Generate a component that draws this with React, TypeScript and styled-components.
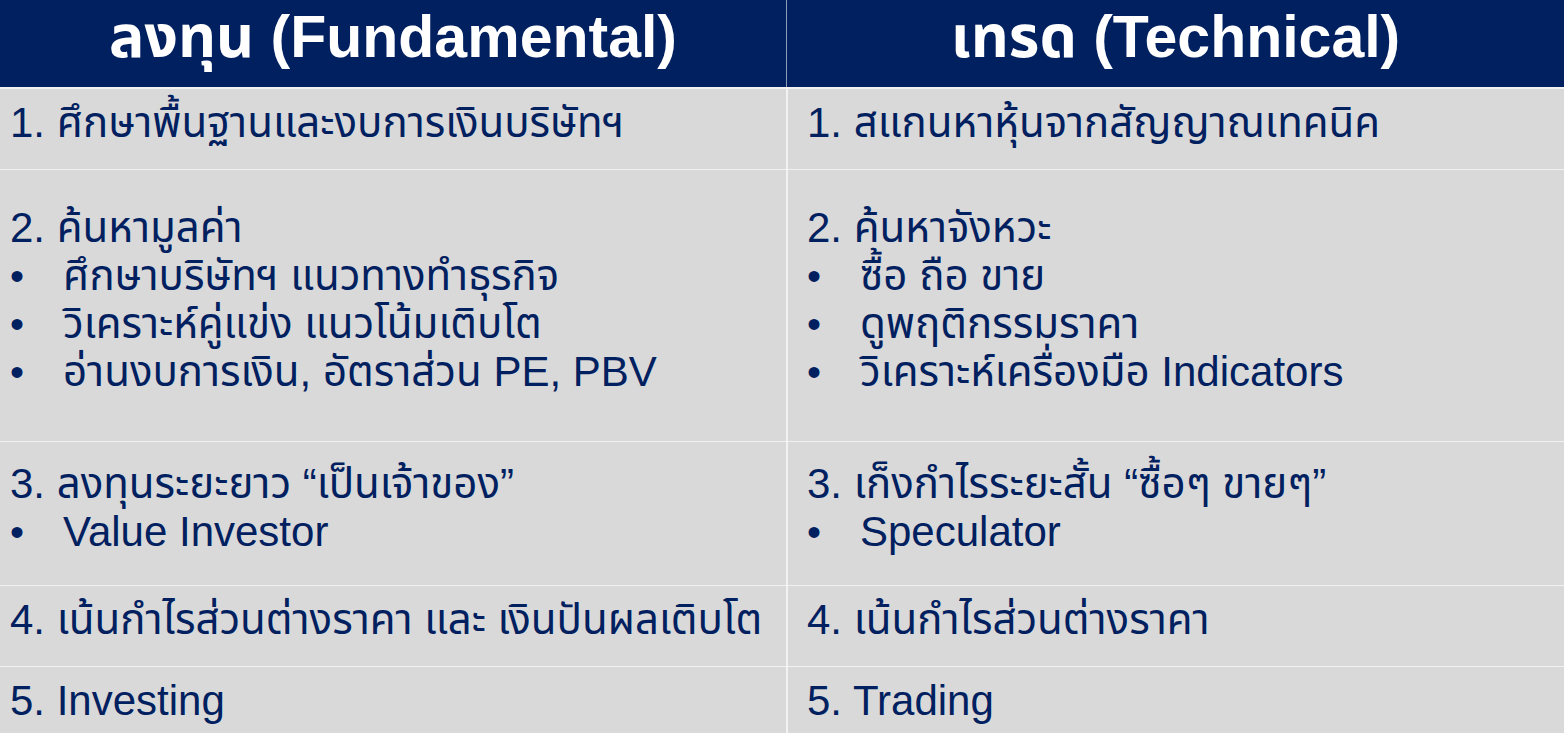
import React from "react";
import styled, { createGlobalStyle } from "styled-components";

const Global = createGlobalStyle`
  html, body {
    margin: 0;
    padding: 0;
    overflow: hidden;
    background: #d9d9d9;
  }
  body {
    font-family: "Liberation Sans", "Noto Sans Thai", "Noto Sans", sans-serif;
  }
`;

const Table = styled.div`
  width: 1564px;
  display: flex;
  flex-direction: column;
  gap: 1px;
  background: #f2f2f2;
`;

const HeaderRow = styled.div`
  display: grid;
  grid-template-columns: 786px 1fr;
  column-gap: 1px;
  height: 87px;
  margin-bottom: 1px;
  background: #8e9cbb;
`;

const HeaderCell = styled.div`
  background: #002060;
  color: #ffffff;
  display: flex;
  align-items: center;
  justify-content: center;
  font-weight: 700;
  font-size: 59px;
  line-height: 1;
  padding-bottom: 12px;
`;

const Row = styled.div<{ $h: number }>`
  display: grid;
  grid-template-columns: 786px 1fr;
  column-gap: 2px;
  height: ${(p) => p.$h}px;
`;

const Cell = styled.div<{ $pad: number }>`
  background: #d9d9d9;
  color: #002060;
  display: flex;
  flex-direction: column;
  justify-content: center;
  padding-left: ${(p) => p.$pad}px;
  padding-bottom: 12px;
  font-size: 42px;
  line-height: 48px;
`;

const Line = styled.div`
  white-space: nowrap;
`;

const Bullet = styled.div`
  display: flex;
  white-space: nowrap;
  &::before {
    content: "•";
    font-size: 40px;
    width: 53px;
    flex: none;
  }
`;

type CellData = { title: string; bullets?: string[] };

const rows: { h: number; left: CellData; right: CellData }[] = [
  {
    h: 80,
    left: { title: "1. ศึกษาพื้นฐานและงบการเงินบริษัทฯ" },
    right: { title: "1. สแกนหาหุ้นจากสัญญาณเทคนิค" },
  },
  {
    h: 271,
    left: {
      title: "2. ค้นหามูลค่า",
      bullets: [
        "ศึกษาบริษัทฯ แนวทางทำธุรกิจ",
        "วิเคราะห์คู่แข่ง แนวโน้มเติบโต",
        "อ่านงบการเงิน, อัตราส่วน PE, PBV",
      ],
    },
    right: {
      title: "2. ค้นหาจังหวะ",
      bullets: ["ซื้อ ถือ ขาย", "ดูพฤติกรรมราคา", "วิเคราะห์เครื่องมือ Indicators"],
    },
  },
  {
    h: 143,
    left: { title: "3. ลงทุนระยะยาว “เป็นเจ้าของ”", bullets: ["Value Investor"] },
    right: { title: "3. เก็งกำไรระยะสั้น “ซื้อๆ ขายๆ”", bullets: ["Speculator"] },
  },
  {
    h: 80,
    left: { title: "4. เน้นกำไรส่วนต่างราคา และ เงินปันผลเติบโต" },
    right: { title: "4. เน้นกำไรส่วนต่างราคา" },
  },
  {
    h: 80,
    left: { title: "5. Investing" },
    right: { title: "5. Trading" },
  },
];

const CellContent: React.FC<{ d: CellData; pad: number }> = ({ d, pad }) => (
  <Cell $pad={pad}>
    <Line>{d.title}</Line>
    {d.bullets?.map((b) => (
      <Bullet key={b}>{b}</Bullet>
    ))}
  </Cell>
);

export default function App() {
  return (
    <>
      <Global />
      <Table>
        <HeaderRow>
          <HeaderCell>ลงทุน (Fundamental)</HeaderCell>
          <HeaderCell>เทรด (Technical)</HeaderCell>
        </HeaderRow>
        {rows.map((r, i) => (
          <Row key={i} $h={r.h}>
            <CellContent d={r.left} pad={10} />
            <CellContent d={r.right} pad={19} />
          </Row>
        ))}
      </Table>
    </>
  );
}
